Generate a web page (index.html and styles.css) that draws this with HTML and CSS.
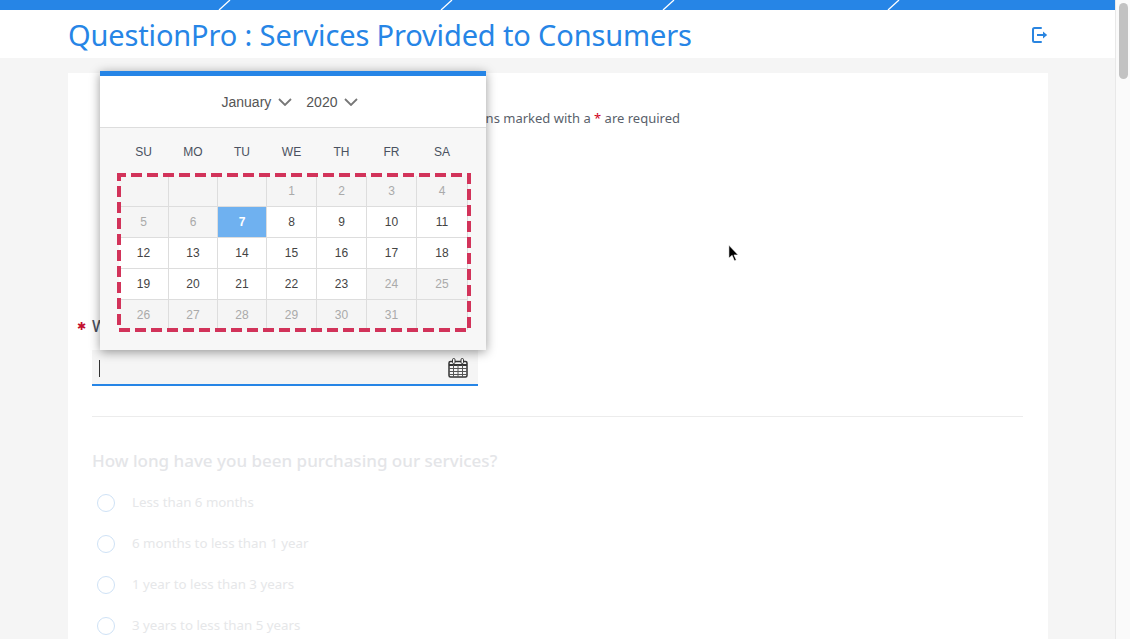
FILE: index.html
```html
<!DOCTYPE html>
<html>
<head>
    <title>QuestionPro : Services Provided to Consumers</title>
    <meta charset="UTF-8">
    <link rel="stylesheet" href="styles.css">
</head>
<body>
    <div class="page">
        <div class="main">
            <svg class="top-bar" viewBox="0 0 1115 10" preserveAspectRatio="none">
                <path d="M219 10L230 0M441 10L452 0M663 10L674 0M888 10L899 0" stroke="#fff" stroke-width="1.3"/>
            </svg>
            <div class="header">
                <h1>QuestionPro : Services Provided to Consumers</h1>
                <svg class="exit-icon" viewBox="0 0 18 18">
                    <path d="M10 3H3.500A1.500 1.500 0 0 0 2 4.500v11A1.500 1.500 0 0 0 3.500 17H10" fill="none" stroke="#2a85e0" stroke-width="2" stroke-linecap="round"/>
                    <path d="M6 9h6V6.500l4.200 3.500L12 13.500V11H6z" fill="#2a85e0"/>
                </svg>
            </div>
            <div class="content">
                <div class="card">
                    <div class="note">Questions marked with a <span class="red">*</span> are required</div>
                    <div class="question-label"><span class="star">✱</span>W</div>
                    <div class="date-input">
                        <span class="caret"></span>
                        <svg class="cal-icon" viewBox="0 0 20 20">
                            <rect x="1" y="3.500" width="18" height="15.500" rx="1.500" fill="none" stroke="#333" stroke-width="1.500"/>
                            <path d="M1 7h18" stroke="#333" stroke-width="2"/>
                            <path d="M1 10.500h18M1 13.500h18M1 16.500h18M5.500 7v12M10 7v12M14.500 7v12" stroke="#555" stroke-width="1"/>
                            <rect x="4.500" y="0.500" width="2.500" height="5" rx="1.200" fill="#fff" stroke="#333"/>
                            <rect x="13" y="0.500" width="2.500" height="5" rx="1.200" fill="#fff" stroke="#333"/>
                        </svg>
                    </div>
                    <div class="divider"></div>
                    <div class="faded-title">How long have you been purchasing our services?</div>
                    <div class="option"><span class="radio"></span>Less than 6 months</div>
                    <div class="option"><span class="radio"></span>6 months to less than 1 year</div>
                    <div class="option"><span class="radio"></span>1 year to less than 3 years</div>
                    <div class="option"><span class="radio"></span>3 years to less than 5 years</div>
                </div>
            </div>
        </div>
        <div class="scrollbar"><div class="scroll-thumb"></div></div>
    </div>

    <div class="calendar">
        <div class="cal-header">
            <span>January</span>
            <svg class="chevron" viewBox="0 0 14 8"><path d="M1 1l6 6 6-6" fill="none" stroke="#777" stroke-width="1.800"/></svg>
            <span class="cal-year">2020</span>
            <svg class="chevron" viewBox="0 0 14 8"><path d="M1 1l6 6 6-6" fill="none" stroke="#777" stroke-width="1.800"/></svg>
        </div>
        <div class="cal-body">
            <div class="weekdays">
                <span>SU</span><span>MO</span><span>TU</span><span>WE</span><span>TH</span><span>FR</span><span>SA</span>
            </div>
            <div class="days">
                <span class="off"></span><span class="off"></span><span class="off"></span><span class="off">1</span><span class="off">2</span><span class="off">3</span><span class="off">4</span>
                <span class="off">5</span><span class="off">6</span><span class="today">7</span><span>8</span><span>9</span><span>10</span><span>11</span>
                <span>12</span><span>13</span><span>14</span><span>15</span><span>16</span><span>17</span><span>18</span>
                <span>19</span><span>20</span><span>21</span><span>22</span><span>23</span><span class="off">24</span><span class="off">25</span>
                <span class="off">26</span><span class="off">27</span><span class="off">28</span><span class="off">29</span><span class="off">30</span><span class="off">31</span><span class="off"></span>
            </div>
        </div>
        <svg class="dash-box" viewBox="0 0 354 159">
            <rect x="2" y="2" width="350" height="155" fill="none" stroke="#d2335a" stroke-width="4" stroke-dasharray="11 5" stroke-dashoffset="4"/>
        </svg>
    </div>

    <svg class="pointer" viewBox="0 0 12 18">
        <path d="M1 0v14l3.500-3 2.500 6 2-1-2.500-5.500H11z" fill="#000" stroke="#fff" stroke-width="0.600"/>
    </svg>
</body>
</html>
```

FILE: styles.css
```css
html, body {
    margin: 0;
    height: 100%;
    overflow: hidden;
}
body {
    font-family: "Noto Sans", Arial, sans-serif;
    background: #f5f5f5;
}
.page {
    display: flex;
    height: 639px;
}
.main {
    flex-grow: 1;
    display: flex;
    flex-direction: column;
    min-width: 0;
}
.top-bar {
    display: block;
    width: 100%;
    height: 10px;
    background: #2685e6;
    flex-shrink: 0;
}
.header {
    height: 48px;
    flex-shrink: 0;
    background: white;
    display: flex;
    align-items: center;
    justify-content: space-between;
    padding: 0 66px 0 68px;
}
.header h1 {
    margin: 0;
    font-size: 29px;
    font-weight: 400;
    letter-spacing: -0.14px;
    color: #2685e6;
    white-space: nowrap;
}
.exit-icon {
    width: 18px;
    height: 18px;
}
.content {
    flex-grow: 1;
    overflow: hidden;
    padding: 15px 67px 0 68px;
}
.card {
    background: white;
    height: 700px;
    padding: 35px 25px 0 24px;
}
.note {
    font-size: 13px;
    line-height: 20px;
    color: #5a5f6b;
    text-align: right;
    padding-right: 343px;
}
.red {
    color: #d0021b;
}
.question-label {
    margin-top: 188px;
    font-size: 16px;
    line-height: 20px;
    font-weight: 500;
    color: #4a5160;
    display: flex;
}
.star {
    color: #c4112f;
    font-size: 11px;
    width: 15px;
    margin-left: -15px;
}
.date-input {
    margin-top: 14px;
    width: 386px;
    height: 36px;
    box-sizing: border-box;
    background: #f5f5f5;
    border-bottom: 2px solid #2685e6;
    display: flex;
    align-items: center;
    justify-content: space-between;
    padding: 2px 10px 0 7px;
}
.caret {
    width: 1px;
    height: 17px;
    background: #333;
}
.cal-icon {
    width: 20px;
    height: 20px;
}
.divider {
    margin-top: 30px;
    height: 1px;
    background: #ececec;
}
.faded-title {
    margin-top: 31px;
    font-size: 17px;
    line-height: 26px;
    font-weight: 500;
    color: #e4e5e8;
}
.option {
    display: flex;
    align-items: center;
    height: 41px;
    font-size: 13.300px;
    color: #e6e7e9;
}
.faded-title + .option {
    margin-top: 7px;
}
.radio {
    width: 16px;
    height: 16px;
    border: 1px solid #cfe2f6;
    border-radius: 50%;
    margin: 2px 17px 0 5px;
}
.scrollbar {
    width: 15px;
    flex-shrink: 0;
    background: #fafafa;
    border-left: 1px solid #e8e8e8;
    box-sizing: border-box;
    padding: 3px 2px 0 3px;
}
.scroll-thumb {
    height: 76px;
    background: #c2c2c2;
    border-radius: 5px;
}
.calendar {
    position: absolute;
    left: 100px;
    top: 71px;
    width: 386px;
    height: 279px;
    box-sizing: border-box;
    border-top: 5px solid #2685e6;
    background: #f7f7f7;
    box-shadow: 0 2px 10px rgba(0, 0, 0, 0.4);
    font-family: "Liberation Sans", Arial, sans-serif;
}
.cal-header {
    height: 52px;
    box-sizing: border-box;
    background: white;
    border-bottom: 1px solid #ddd;
    display: flex;
    align-items: center;
    justify-content: center;
    font-size: 14px;
    color: #555;
    padding-right: 6px;
}
.cal-year {
    margin-left: 14px;
}
.chevron {
    width: 14px;
    height: 8px;
    margin-left: 7px;
}
.cal-body {
    padding: 0 18px 0 19px;
}
.weekdays {
    display: grid;
    grid-template-columns: 49px 48px 48px 49px 49px 49px 50px;
    column-gap: 1px;
    height: 48px;
    align-items: center;
    text-align: center;
    font-size: 12px;
    color: #4a5160;
}
.days {
    display: grid;
    grid-template-columns: 49px 48px 48px 49px 49px 49px 50px;
    grid-auto-rows: 30px;
    gap: 1px;
    background: #ddd;
}
.days span {
    background: white;
    display: flex;
    align-items: center;
    justify-content: center;
    font-size: 12px;
    color: #444;
}
.days .off {
    background: #f5f5f5;
    color: #aaa;
}
.days .today {
    background: #6fb1f0;
    color: white;
    font-weight: bold;
}
.dash-box {
    position: absolute;
    left: 17px;
    top: 97px;
    width: 354px;
    height: 159px;
}
.pointer {
    position: absolute;
    left: 728px;
    top: 245px;
    width: 11px;
    height: 17px;
}
```
